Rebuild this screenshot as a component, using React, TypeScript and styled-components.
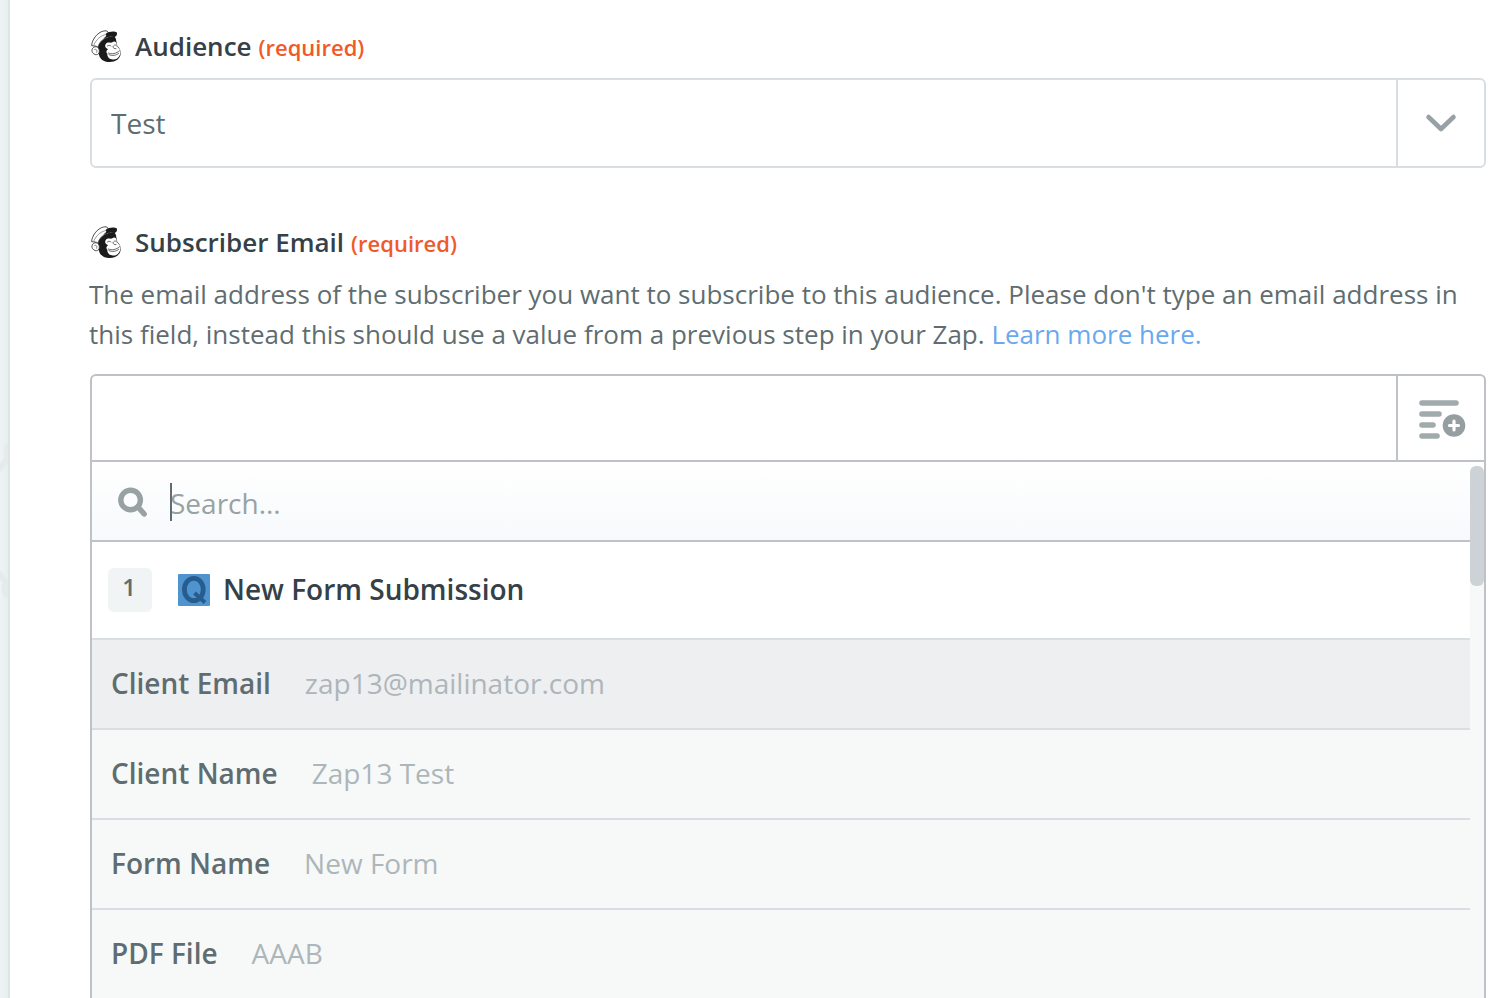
import React from "react";
import styled, { createGlobalStyle } from "styled-components";

const GlobalStyle = createGlobalStyle`
  *, *::before, *::after { box-sizing: border-box; }
  body {
    margin: 0;
    background: #fff;
    color: #5f6d71;
    font-family: "Open Sans", "Noto Sans", sans-serif;
    font-size: 28px;
  }
  button, input, select { font: inherit; color: inherit; }
`;

const Page = styled.div`
  display: flex;
  min-height: 100vh;
`;

const Backdrop = styled.div`
  position: relative;
  flex: none;
  width: 10px;
  overflow: hidden;
  background: linear-gradient(to right, #eef3f4, #e8edee);
  border-right: 2px solid #dee3e6;
`;

const BackdropShapes = styled.svg`
  position: absolute;
  top: 440px;
  left: 0;
`;

const Panel = styled.main`
  flex: 1;
  min-width: 0;
  padding: 28px 18px 0 80px;
`;

const Field = styled.section`
  & + & { margin-top: 56px; }
`;

const FieldLabel = styled.label`
  display: flex;
  align-items: center;
  height: 36px;
  margin-bottom: 14px;
  color: #354147;
  font-size: 26px;
  font-weight: 600;

  svg { flex: none; margin-right: 13px; }
`;

const Required = styled.span`
  margin: 2px 0 0 7px;
  color: #f05a2b;
  font-size: 22px;
`;

const Help = styled.p`
  margin: 0 0 20px -1px;
  font-size: 26px;
  line-height: 40px;
`;

const HelpLink = styled.a`
  color: #69a8ee;
  text-decoration: none;
`;

const SelectBox = styled.div`
  display: flex;
  height: 90px;
  border: 2px solid #d9dee2;
  border-radius: 6px;
`;

const Select = styled.select`
  flex: 1;
  min-width: 0;
  padding: 0 19px;
  border: 0;
  outline: 0;
  background: transparent;
  appearance: none;
`;

const SideCell = styled.span`
  display: flex;
  align-items: center;
  justify-content: center;
  flex: none;
  width: 88px;
  border-left: 2px solid #d9dee2;
  pointer-events: none;
`;

const Combo = styled.div`
  border: 2px solid #bec2c6;
  border-bottom: 0;
  border-radius: 6px 6px 0 0;
`;

const ComboHead = styled.div`
  display: flex;
  height: 86px;
  border-bottom: 2px solid #bec2c6;
`;

const ValueInput = styled.input`
  flex: 1;
  min-width: 0;
  padding: 0 19px;
  border: 0;
  outline: 0;
  background: transparent;
`;

const InsertButton = styled.button`
  flex: none;
  width: 88px;
  padding: 4px 0 0 2px;
  border: 0;
  border-left: 2px solid #bec2c6;
  background: transparent;

  svg { display: block; margin: 0 auto; }
`;

const Dropdown = styled.div`
  display: flex;
`;

const Options = styled.div`
  flex: 1;
  min-width: 0;
`;

const Track = styled.div`
  flex: none;
  width: 14px;
  padding-top: 4px;
  background: linear-gradient(#fff 80px, #f7f9f8 80px);
`;

const Thumb = styled.div`
  height: 120px;
  border-radius: 6px;
  background: #cdd2d6;
`;

const SearchRow = styled.label`
  display: flex;
  align-items: center;
  height: 80px;
  padding: 2px 0 0 26px;
  border-bottom: 2px solid #bec2c6;
  background: linear-gradient(#fff, #f7f9fb);
`;

const SearchField = styled.span`
  position: relative;
  flex: 1;
  margin-left: 22px;
`;

const Caret = styled.span`
  position: absolute;
  top: 2px;
  left: 0;
  width: 2px;
  height: 38px;
  background: #5f6d71;
`;

const SearchInput = styled.input`
  display: block;
  width: 100%;
  height: 42px;
  padding: 2px 0 0;
  border: 0;
  outline: 0;
  background: transparent;

  &::placeholder { color: #98a2a3; opacity: 1; }
`;

const StepHeader = styled.h2`
  display: flex;
  align-items: center;
  height: 98px;
  margin: 0;
  padding-left: 16px;
  border-bottom: 2px solid #d9dee2;
  background: #fff;
  color: #354147;
  font-size: 28px;
  font-weight: 600;

  svg { margin: 0 13px 0 26px; }
`;

const StepTitle = styled.span`
  padding-bottom: 2px;
`;

const StepNumber = styled.span`
  width: 44px;
  height: 44px;
  padding-right: 2px;
  border-radius: 6px;
  background: #f0f4f5;
  color: #5f6d71;
  font-size: 24px;
  line-height: 38px;
  text-align: center;
`;

const OptionList = styled.ul`
  margin: 0;
  padding: 0;
  list-style: none;
`;

const OptionItem = styled.li`
  & + & { border-top: 2px solid #dadde1; }
`;

const Option = styled.button<{ $active?: boolean }>`
  display: flex;
  align-items: center;
  gap: 34px;
  width: 100%;
  height: 88px;
  padding: 0 19px 2px;
  border: 0;
  background: ${(p) => (p.$active ? "#eeeff1" : "#f7f9f8")};
  text-align: left;
`;

const OptionName = styled.span`
  font-weight: 600;
`;

const OptionSample = styled.span`
  color: #adb6ba;
`;

const Freddie = () => (
  <svg width="32" height="32" viewBox="0 0 96 96" aria-hidden="true">
    <path
      d="M24 52C26 38 40 24 58 20C68 17 76 18 78 28C79 36 81 42 82 48C90 55 93 63 92 72C90 87 76 96 59 96C40 96 29 86 27 74C21 68 21 60 24 52Z"
      fill="#1b1b1b"
    />
    <path
      d="M5 47C5 31 21 7 41 3C46 2 51 2 54 6L58 20C43 23 28 34 24 52C19 47 11 48 5 47Z"
      fill="#fff"
      stroke="#333"
      strokeWidth="2.6"
      strokeLinejoin="round"
    />
    <path d="M11 46C18 29 32 16 50 13" fill="none" stroke="#555" strokeWidth="1.8" />
    <path d="M47 11C56 4 73 2 80 7C83 13 80 19 73 22C66 17 56 19 40 25C48 20 51 16 47 11Z" fill="#1b1b1b" />
    <path
      d="M11 52C19 47 29 53 28 64C28 73 19 77 12 72C4 67 4 57 11 52Z"
      fill="#fff"
      stroke="#333"
      strokeWidth="2.6"
    />
    <path d="M13 59C18 56 22 60 20 68" fill="none" stroke="#444" strokeWidth="2" />
    <path
      d="M47 43C52 34 62 40 67 37C73 31 81 36 80 46C82 53 90 56 91 62C92 68 91 72 89 76C85 86 76 90 65 88C56 86 51 79 52 71C47 67 49 61 54 58C48 55 43 50 47 43Z"
      fill="#fff"
    />
    <path
      d="M52 48C56 45 60 45 63 48M72 46C75 44 77 45 79 47M69 49C69 54 72 57 78 56M55 69C65 74 79 71 89 62M57 74C66 79 80 76 86 70"
      fill="none"
      stroke="#333"
      strokeWidth="2.2"
      strokeLinecap="round"
    />
  </svg>
);

const ChevronIcon = () => (
  <svg width="32" height="20" viewBox="0 0 32 20" aria-hidden="true">
    <path
      d="M3.5 4L16 16L28.5 4"
      fill="none"
      stroke="#98a2a6"
      strokeWidth="4.6"
      strokeLinecap="round"
      strokeLinejoin="round"
    />
  </svg>
);

const InsertIcon = () => (
  <svg width="48" height="40" viewBox="0 0 48 40" aria-hidden="true">
    <path
      d="M4 3H38M4 14H21M4 25H15M4 36H19"
      stroke="#a1aaad"
      strokeWidth="5.6"
      strokeLinecap="round"
    />
    <circle cx="36" cy="25.5" r="11.3" fill="#959fa1" />
    <path d="M36 21V30M31.5 25.5H40.5" stroke="#fff" strokeWidth="3.2" strokeLinecap="round" />
  </svg>
);

const SearchIcon = () => (
  <svg width="30" height="32" viewBox="0 0 30 32" aria-hidden="true">
    <circle cx="12.6" cy="14" r="9.8" fill="none" stroke="#98a2a3" strokeWidth="5.4" />
    <path d="M20 21L26.2 28" stroke="#98a2a3" strokeWidth="5.4" strokeLinecap="round" />
  </svg>
);

const FormLogo = () => (
  <svg width="32" height="32" viewBox="0 0 32 32" aria-hidden="true">
    <rect width="32" height="32" rx="1" fill="#4f94cf" />
    <ellipse cx="15.8" cy="15.5" rx="9.4" ry="11.2" fill="none" stroke="#275d8e" strokeWidth="4.8" />
    <path d="M16.5 19L27 28.5" stroke="#275d8e" strokeWidth="4" />
  </svg>
);

const options = [
  { name: "Client Email", sample: "zap13@mailinator.com", active: true },
  { name: "Client Name", sample: "Zap13 Test" },
  { name: "Form Name", sample: "New Form" },
  { name: "PDF File", sample: "AAAB" },
];

export default function App() {
  return (
    <>
      <GlobalStyle />
      <Page>
        <Backdrop>
          <BackdropShapes width="8" height="170" viewBox="0 0 8 170" aria-hidden="true">
            <path d="M8 3C3 6 3 13 5 17L0 23V32L8 23Z" fill="#e5eaeb" />
            <path d="M0 130L8 140V159C2 157 0 149 3 143L0 139Z" fill="#e5eaeb" />
          </BackdropShapes>
        </Backdrop>
        <Panel>
          <Field>
            <FieldLabel htmlFor="audience">
              <Freddie />
              Audience <Required>(required)</Required>
            </FieldLabel>
            <SelectBox>
              <Select id="audience" defaultValue="Test">
                <option>Test</option>
              </Select>
              <SideCell>
                <ChevronIcon />
              </SideCell>
            </SelectBox>
          </Field>
          <Field>
            <FieldLabel htmlFor="email">
              <Freddie />
              Subscriber Email <Required>(required)</Required>
            </FieldLabel>
            <Help>
              The email address of the subscriber you want to subscribe to this audience. Please don't type an email
              address in this field, instead this should use a value from a previous step in your Zap.{" "}
              <HelpLink href="#learn-more">Learn more here.</HelpLink>
            </Help>
            <Combo>
              <ComboHead>
                <ValueInput id="email" type="text" />
                <InsertButton type="button" aria-label="Insert a field">
                  <InsertIcon />
                </InsertButton>
              </ComboHead>
              <Dropdown>
                <Options>
                  <SearchRow>
                    <SearchIcon />
                    <SearchField>
                      <SearchInput type="text" placeholder="Search..." aria-label="Search" />
                      <Caret />
                    </SearchField>
                  </SearchRow>
                  <StepHeader>
                    <StepNumber>1</StepNumber>
                    <FormLogo />
                    <StepTitle>New Form Submission</StepTitle>
                  </StepHeader>
                  <OptionList>
                    {options.map((o) => (
                      <OptionItem key={o.name}>
                        <Option type="button" $active={o.active}>
                          <OptionName>{o.name}</OptionName>
                          <OptionSample>{o.sample}</OptionSample>
                        </Option>
                      </OptionItem>
                    ))}
                  </OptionList>
                </Options>
                <Track>
                  <Thumb />
                </Track>
              </Dropdown>
            </Combo>
          </Field>
        </Panel>
      </Page>
    </>
  );
}
